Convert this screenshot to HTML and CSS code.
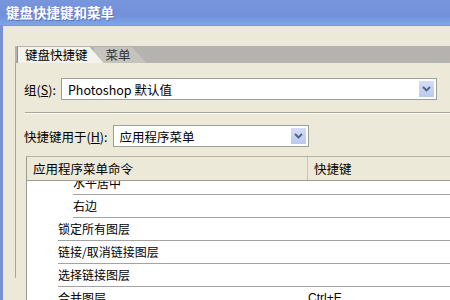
FILE: index.html
```html
<!doctype html>
<html lang="zh-CN">
    <head>
        <meta charset="UTF-8" />
        <title>键盘快捷键和菜单</title>
        <link rel="stylesheet" href="styles.css">
    </head>
    <body>
        <div class="titlebar">键盘快捷键和菜单</div>

        <div class="window">
            <div class="top-gap"></div>

            <div class="tabs">
                <div class="tab active">键盘快捷键</div>
                <div class="tab">菜单</div>
            </div>

            <div class="panel">
                <div class="field">
                    <label>组(<u>S</u>):</label>
                    <div class="select wide">
                        <span>Photoshop 默认值</span>
                        <span class="arrow">
                            <svg width="9" height="6" viewBox="0 0 9 6"><path d="M1 1 L4.5 4.5 L8 1" fill="none" stroke="#4d6185" stroke-width="1.8"/></svg>
                        </span>
                    </div>
                </div>

                <div class="divider"></div>

                <div class="field">
                    <label>快捷键用于(<u>H</u>):</label>
                    <div class="select narrow">
                        <span>应用程序菜单</span>
                        <span class="arrow">
                            <svg width="9" height="6" viewBox="0 0 9 6"><path d="M1 1 L4.5 4.5 L8 1" fill="none" stroke="#4d6185" stroke-width="1.8"/></svg>
                        </span>
                    </div>
                </div>

                <div class="table">
                    <div class="table-head">
                        <div class="col-cmd">应用程序菜单命令</div>
                        <div class="col-key">快捷键</div>
                    </div>
                    <div class="table-body">
                        <div class="rows">
                            <div class="row sub"><span class="cmd">水平居中</span><span class="key"></span></div>
                            <div class="row sub"><span class="cmd">右边</span><span class="key"></span></div>
                            <div class="row"><span class="cmd">锁定所有图层</span><span class="key"></span></div>
                            <div class="row"><span class="cmd">链接/取消链接图层</span><span class="key"></span></div>
                            <div class="row"><span class="cmd">选择链接图层</span><span class="key"></span></div>
                            <div class="row"><span class="cmd">合并图层</span><span class="key">Ctrl+E</span></div>
                        </div>
                    </div>
                </div>
            </div>
        </div>
    </body>
</html>
```

FILE: styles.css
```css
body {
    margin: 0;
    width: 450px;
    height: 300px;
    overflow: hidden;
    background-color: #ece9d8;
    font-family: "Noto Sans CJK SC", "DejaVu Sans", sans-serif;
    font-size: 12px;
    color: #000;
}

.titlebar {
    height: 25px;
    line-height: 24px;
    padding-left: 6px;
    background: linear-gradient(to bottom, #7896dc 0%, #7190da 60%, #7ca6e8 100%);
    border-bottom: 1px solid #8a8fcc;
    color: #fff;
    font-weight: bold;
    font-size: 13.5px;
    text-shadow: 1px 1px 0 #5a70b8;
}

.window {
    border-left: 3px solid #7b8fd6;
    width: 447px;
    height: 274px;
}

.top-gap {
    height: 20px;
}

.tabs {
    margin-left: 12px;
    height: 17px;
    background-color: #b4b3b0;
    display: flex;
    padding-left: 2px;
    align-items: flex-end;
}

.tab {
    height: 16px;
    line-height: 16px;
    font-size: 12.5px;
}

.tab.active {
    background-color: #f3f2ec;
    padding: 0 16px 0 7px;
    clip-path: polygon(0 0, 84% 0, 100% 100%, 0 100%);
    border-left: 1px solid #8e8e8e;
    position: relative;
    z-index: 1;
}

.tab:not(.active) {
    background-color: #c4c3be;
    color: #333;
    margin-left: -10px;
    padding: 0 16px 0 12px;
    clip-path: polygon(0 0, 72% 0, 100% 100%, 0 100%);
}

.panel {
    margin-left: 12px;
    border-left: 1px solid #a7a69c;
    padding: 15px 0 0 8px;
    height: 200px;
}

.field {
    display: flex;
    align-items: center;
    gap: 5px;
}

.field label {
    font-size: 12.5px;
}

.select {
    box-sizing: border-box;
    height: 22px;
    background-color: #fff;
    border: 1px solid #9aa09c;
    display: flex;
    align-items: center;
    justify-content: space-between;
    padding: 0 2px 0 6px;
    font-size: 12.5px;
}

.select.wide {
    width: 376px;
}

.select.narrow {
    width: 196px;
}

.arrow {
    width: 15px;
    height: 16px;
    background: linear-gradient(to bottom, #d3ddf6, #b9c9f0);
    display: flex;
    align-items: center;
    justify-content: center;
}

.divider {
    height: 1px;
    background-color: #a9a79a;
    border-bottom: 1px solid #fbfbf8;
    margin: 12px 0 11px 1px;
}

.table {
    margin: 9px 0 0 2px;
    border-left: 1px solid #9c9b92;
    border-top: 1px solid #b5b3a8;
}

.table-head {
    display: flex;
    height: 23px;
    line-height: 23px;
    border-bottom: 1px solid #9d9c95;
    background-color: #ece9d8;
    font-size: 12.5px;
}

.col-cmd {
    width: 274px;
    padding-left: 6px;
    border-right: 1px solid #c7c5b8;
}

.col-key {
    padding-left: 6px;
}

.table-body {
    background-color: #fff;
    height: 130px;
    overflow: hidden;
}

.rows {
    margin-top: -9px;
}

.row {
    display: flex;
    height: 23px;
    line-height: 22px;
    margin-left: 31px;
    border-bottom: 1px solid #a3a3a3;
    box-sizing: border-box;
}

.row.sub {
    margin-left: 46px;
}

.row .cmd {
    width: 250px;
}

.row.sub .cmd {
    width: 235px;
}

.row .key {
    font-family: "Liberation Sans", sans-serif;
    font-size: 12px;
}
```
